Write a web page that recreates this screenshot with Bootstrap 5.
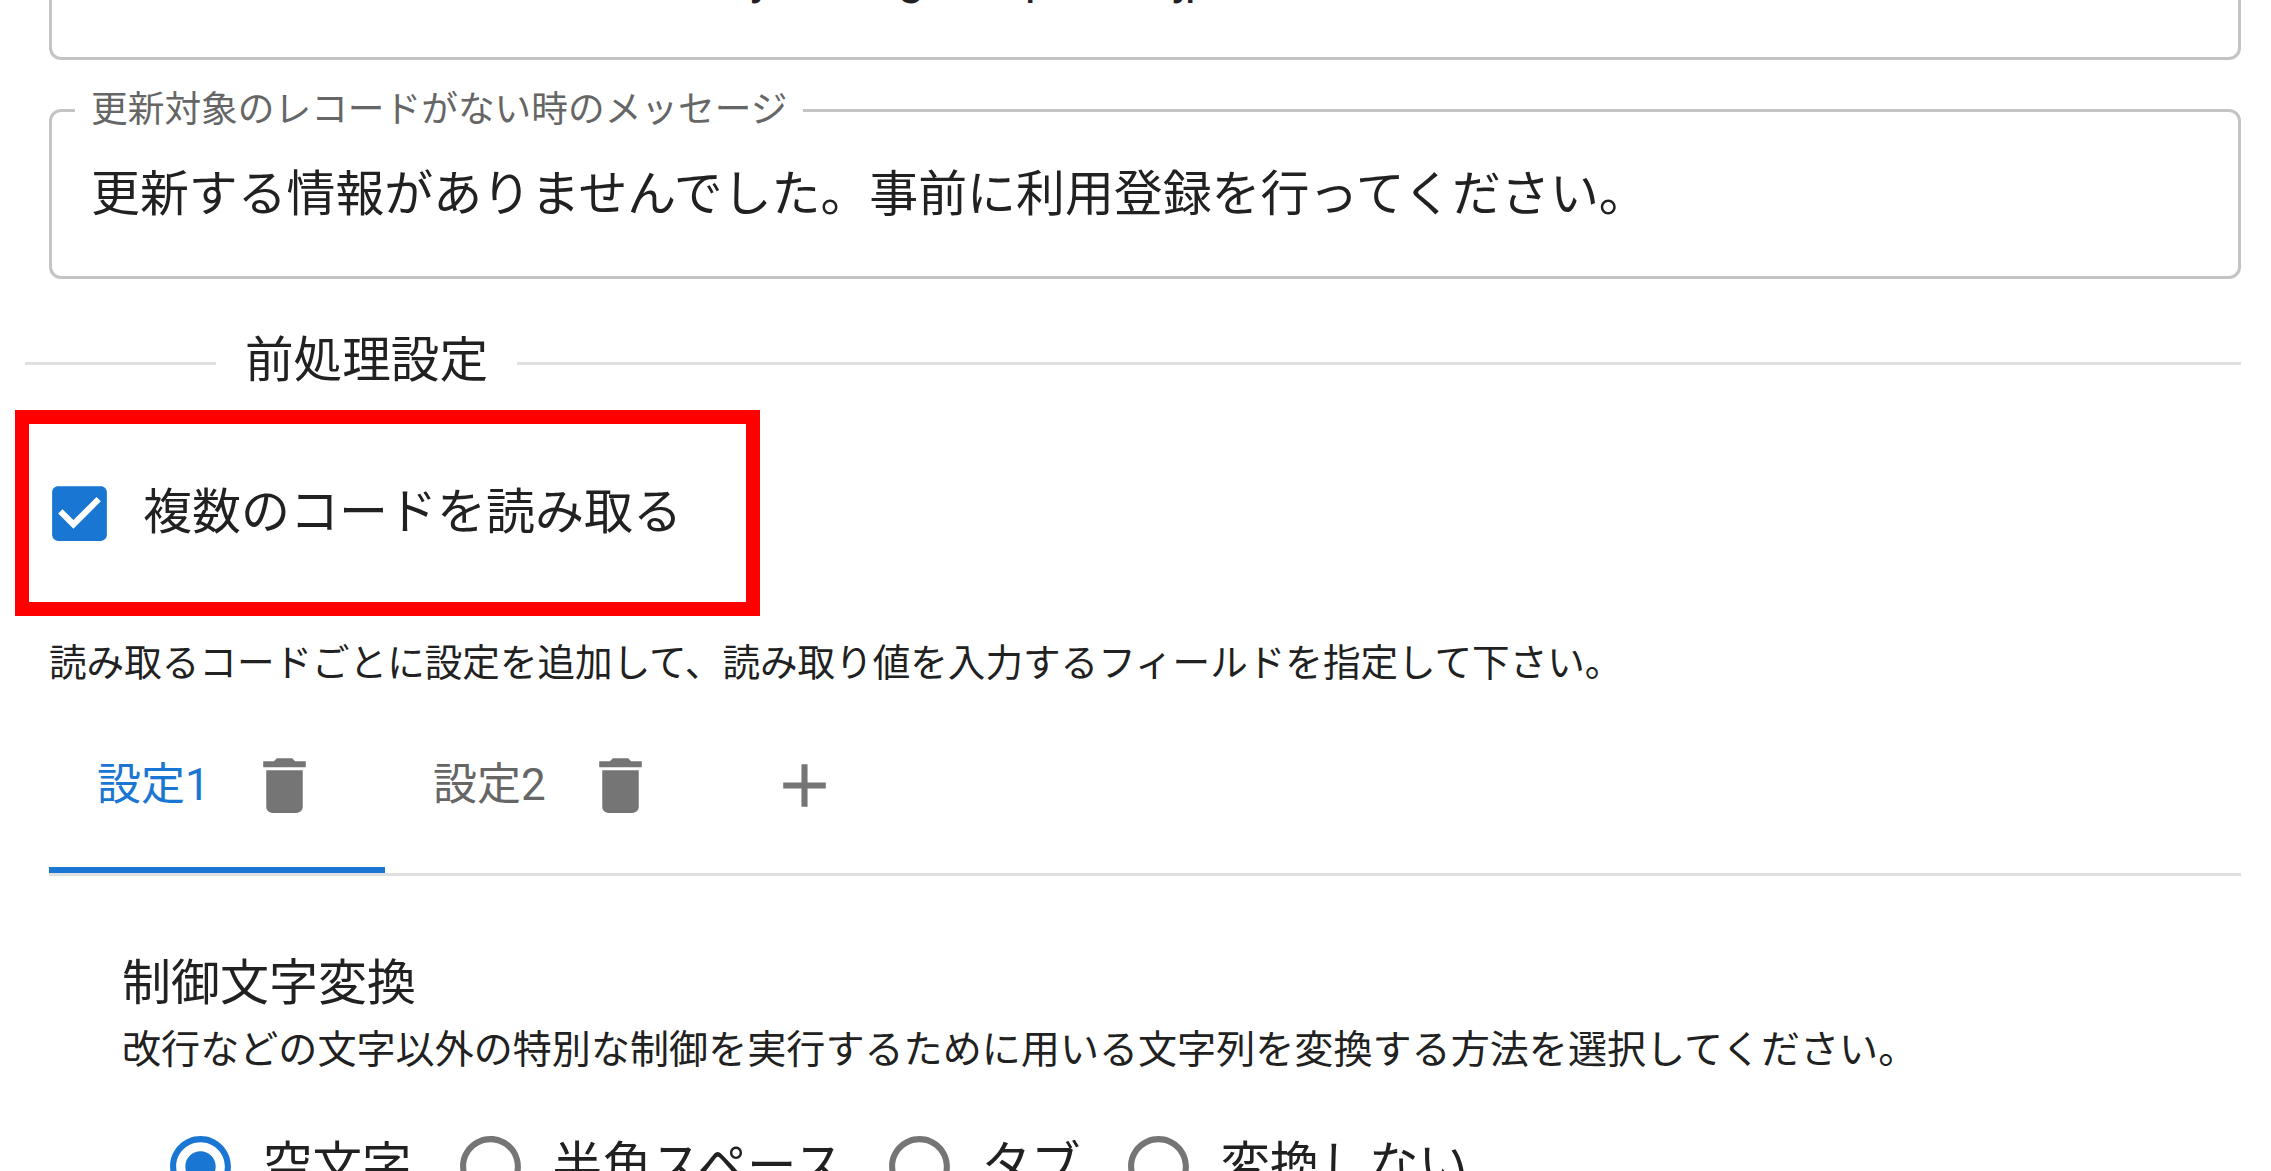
<!DOCTYPE html>
<html lang="ja">
<head>
<meta charset="utf-8">
<title>前処理設定</title>
<link href="https://cdn.jsdelivr.net/npm/bootstrap@5.3.0/dist/css/bootstrap.min.css" rel="stylesheet">
<style>
html, body { height: 1171px; overflow: hidden; }
body { font-family: Roboto, "Noto Sans CJK JP", sans-serif; color: #212121; background: #fff; font-size: 49px; line-height: 1.2; }
.page { padding-right: 30px; }
.out-field { margin: 0 0 32px 49px; height: 187px; border: 3px solid #c4c4c4; border-radius: 12px; padding: 0 39px; min-width: 0; display: flex; align-items: center; }
.out-field.top-clip { margin-top: -127px; }
.out-field legend { float: none; width: auto; margin: 0 0 0 -16px; padding: 0 16px; font-size: 36.7px; line-height: 36px; color: #666; }
.out-field .form-control { border: 0; padding: 0; margin-bottom: 14px; border-radius: 0; background: transparent; font-size: 48.9px; line-height: 1.2; color: #212121; box-shadow: none; }
.frag-row { margin-top: 20px; font-size: 48px; }
.frag-row span { display: inline-block; }
.frag-a { margin-left: 659px; }
.frag-b { margin-left: 125px; }
.frag-c { margin-left: 100px; }
.frag-row .frag-d { margin-left: 120px; width: 13px; }
.sec-divider { margin-left: 25px; margin-top: 50px; height: 60px; gap: 29px; }
.sec-divider i { display: block; height: 3px; background: #e0e0e0; margin-top: 9px; }
.sec-divider .lead-line { width: 191px; flex: none; }
.sec-divider .rest-line { flex: 1 1 auto; }
.sec-divider b { font-weight: 400; font-size: 48.6px; line-height: 60px; padding-top: 3px; }
.red-frame { margin: 21px 0 0 15px; width: 745px; height: 206px; border: 14px solid #f00; padding-left: 14px; gap: 27px; }
.ico { flex: none; display: block; }
.ico-73 { width: 73px; height: 73px; }
.blue-fill { fill: #1976d2; }
.gray-fill { fill: #757575; }
.chk-label { font-size: 49px; line-height: 1.2; }
.help-line { font-size: 37.6px; line-height: 1.2; margin: 25px 0 0 49px; white-space: nowrap; }
.tab-strip { margin: 19px 0 0 49px; border-bottom: 3px solid #e0e0e0; flex-wrap: nowrap; }
.tab-strip .nav-link { height: 168px; width: 336px; padding: 0 0 2px 48px; border-bottom: 6px solid transparent; display: flex; align-items: center; color: #666; font-size: 44px; border-radius: 0; }
.tab-strip .nav-link.active { color: #1976d2; border-bottom-color: #1976d2; }
.tab-strip .tab-name { width: 151px; flex: none; white-space: nowrap; }
.tab-strip .add-tab { width: 168px; padding-left: 47px; }
.sub-sec { margin: 79px 0 0 122px; }
.sub-title { font-size: 49px; line-height: 1.2; margin: 0; font-weight: 400; }
.sub-help { font-size: 39.1px; line-height: 1.2; margin: 13px 0 0; white-space: nowrap; }
.radio-row { margin: 56px 0 0 42px; }
.radio-item { gap: 26px; font-size: 49.5px; line-height: 73px; }
.radio-item + .radio-item { margin-left: 42px; }
.radio-item.radio-c { margin-left: 39px; }
.radio-item.radio-d { margin-left: 41px; }
.radio-item input { position: absolute; }
</style>
</head>
<body>
<main class="page">
  <fieldset class="out-field top-clip">
    <legend class="visually-hidden">メッセージ</legend>
    <div class="frag-row w-100"><span class="frag-a">y</span><span class="frag-b">g</span><span class="frag-c">p</span><span class="frag-d">y</span><span>p</span></div>
  </fieldset>

  <fieldset class="out-field">
    <legend>更新対象のレコードがない時のメッセージ</legend>
    <input type="text" class="form-control" aria-label="更新対象のレコードがない時のメッセージ" value="更新する情報がありませんでした。事前に利用登録を行ってください。">
  </fieldset>

  <div class="sec-divider d-flex align-items-center">
    <i class="lead-line"></i><b>前処理設定</b><i class="rest-line"></i>
  </div>

  <div class="red-frame d-flex align-items-center">
    <input class="visually-hidden" type="checkbox" id="multi" checked>
    <svg class="ico ico-73 blue-fill" viewBox="0 0 24 24" aria-hidden="true"><path d="M19 3H5c-1.11 0-2 .9-2 2v14c0 1.1.89 2 2 2h14c1.11 0 2-.9 2-2V5c0-1.1-.89-2-2-2zm-9 14l-5-5 1.41-1.41L10 14.17l7.59-7.59L19 8l-9 9z"/></svg>
    <label class="form-check-label chk-label" for="multi">複数のコードを読み取る</label>
  </div>

  <p class="help-line">読み取るコードごとに設定を追加して、読み取り値を入力するフィールドを指定して下さい。</p>

  <ul class="nav tab-strip">
    <li class="nav-item"><a class="nav-link active" href="#"><span class="tab-name">設定1</span>
      <svg class="ico ico-73 gray-fill" viewBox="0 0 24 24" aria-hidden="true"><path d="M6 19c0 1.1.9 2 2 2h8c1.1 0 2-.9 2-2V7H6v12zM19 4h-3.5l-1-1h-5l-1 1H5v2h14V4z"/></svg></a></li>
    <li class="nav-item"><a class="nav-link" href="#"><span class="tab-name">設定2</span>
      <svg class="ico ico-73 gray-fill" viewBox="0 0 24 24" aria-hidden="true"><path d="M6 19c0 1.1.9 2 2 2h8c1.1 0 2-.9 2-2V7H6v12zM19 4h-3.5l-1-1h-5l-1 1H5v2h14V4z"/></svg></a></li>
    <li class="nav-item"><a class="nav-link add-tab" href="#" aria-label="追加">
      <svg class="ico ico-73 gray-fill" viewBox="0 0 24 24" aria-hidden="true"><path d="M19 13h-6v6h-2v-6H5v-2h6V5h2v6h6v2z"/></svg></a></li>
  </ul>

  <section class="sub-sec">
    <h2 class="sub-title">制御文字変換</h2>
    <p class="sub-help">改行などの文字以外の特別な制御を実行するために用いる文字列を変換する方法を選択してください。</p>
    <div class="radio-row d-flex">
      <label class="radio-item d-flex"><input class="visually-hidden" type="radio" name="ctl" checked>
        <svg class="ico ico-73 blue-fill" viewBox="0 0 24 24" aria-hidden="true"><path d="M12 7c-2.76 0-5 2.24-5 5s2.24 5 5 5 5-2.24 5-5-2.24-5-5-5zm0-5C6.48 2 2 6.48 2 12s4.48 10 10 10 10-4.48 10-10S17.52 2 12 2zm0 18c-4.42 0-8-3.58-8-8s3.58-8 8-8 8 3.58 8 8-3.58 8-8 8z"/></svg>空文字</label>
      <label class="radio-item d-flex"><input class="visually-hidden" type="radio" name="ctl">
        <svg class="ico ico-73 gray-fill" viewBox="0 0 24 24" aria-hidden="true"><path d="M12 2C6.48 2 2 6.48 2 12s4.48 10 10 10 10-4.48 10-10S17.52 2 12 2zm0 18c-4.42 0-8-3.58-8-8s3.58-8 8-8 8 3.58 8 8-3.58 8-8 8z"/></svg>半角スペース</label>
      <label class="radio-item d-flex radio-c"><input class="visually-hidden" type="radio" name="ctl">
        <svg class="ico ico-73 gray-fill" viewBox="0 0 24 24" aria-hidden="true"><path d="M12 2C6.48 2 2 6.48 2 12s4.48 10 10 10 10-4.48 10-10S17.52 2 12 2zm0 18c-4.42 0-8-3.58-8-8s3.58-8 8-8 8 3.58 8 8-3.58 8-8 8z"/></svg>タブ</label>
      <label class="radio-item d-flex radio-d"><input class="visually-hidden" type="radio" name="ctl">
        <svg class="ico ico-73 gray-fill" viewBox="0 0 24 24" aria-hidden="true"><path d="M12 2C6.48 2 2 6.48 2 12s4.48 10 10 10 10-4.48 10-10S17.52 2 12 2zm0 18c-4.42 0-8-3.58-8-8s3.58-8 8-8 8 3.58 8 8-3.58 8-8 8z"/></svg>変換しない</label>
    </div>
  </section>
</main>
<script src="https://cdn.jsdelivr.net/npm/bootstrap@5.3.0/dist/js/bootstrap.bundle.min.js"></script>
</body>
</html>
